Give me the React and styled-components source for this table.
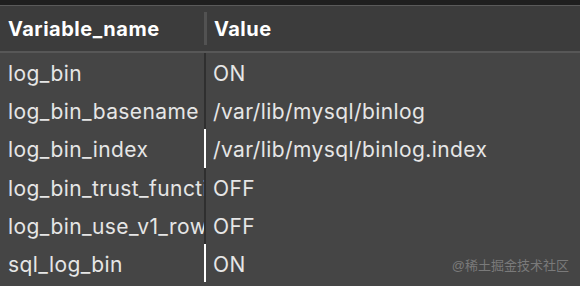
import React from 'react';
import styled, { createGlobalStyle } from 'styled-components';

const GlobalStyle = createGlobalStyle`
  html, body {
    margin: 0;
    padding: 0;
    background: #454545;
  }
  body {
    font-family: Inter, "Liberation Sans", Arial, sans-serif;
  }
`;

const Window = styled.div`
  width: 580px;
  height: 286px;
  overflow: hidden;
  position: relative;
  background: #454545;
  border-top: 5px solid #1f1f1f;
  box-sizing: border-box;
`;

const Header = styled.div`
  display: grid;
  grid-template-columns: 206px 1fr;
  height: 48px;
  background: #3c3c3c;
  border-top: 1px solid #5a5a5a;
  border-bottom: 2px solid #575757;
  box-sizing: border-box;
`;

const HeaderCell = styled.div`
  display: flex;
  align-items: center;
  padding-left: 8px;
  color: #ffffff;
  font-weight: 700;
  font-size: 20px;
  letter-spacing: 0.5px;
  position: relative;
  ${(p) =>
    !p.$first &&
    `
    &::before {
      content: '';
      position: absolute;
      left: -2px;
      top: 6px;
      bottom: 6px;
      width: 3px;
      background: #525252;
    }
  `}
`;

const Body = styled.div`
  display: flex;
  flex-direction: column;
`;

const Row = styled.div`
  display: grid;
  grid-template-columns: 206px 1fr;
  height: 38.2px;
`;

const NameCell = styled.div`
  display: flex;
  align-items: center;
  padding: 3px 0 0 8px;
  color: #e6e6e6;
  font-size: 21px;
  letter-spacing: 0.4px;
  white-space: nowrap;
  overflow: hidden;
  border-right: 2px solid ${(p) => (p.$cursor ? '#ffffff' : '#2f2f2f')};
`;

const ValueCell = styled.div`
  display: flex;
  align-items: center;
  padding: 3px 0 0 7px;
  color: #e6e6e6;
  font-size: 21px;
  letter-spacing: 0.4px;
  white-space: nowrap;
`;

const Watermark = styled.div`
  position: absolute;
  right: 11px;
  bottom: 12px;
  color: #7a7a7a;
  font-size: 13px;
  font-family: "Liberation Sans", "Noto Sans CJK SC", sans-serif;
`;

const rows = [
  { name: 'log_bin', value: 'ON' },
  { name: 'log_bin_basename', value: '/var/lib/mysql/binlog' },
  { name: 'log_bin_index', value: '/var/lib/mysql/binlog.index', cursor: true },
  { name: 'log_bin_trust_function_creators', value: 'OFF' },
  { name: 'log_bin_use_v1_row_events', value: 'OFF' },
  { name: 'sql_log_bin', value: 'ON', cursor: true },
];

const App = () => {
  return (
    <Window>
      <GlobalStyle />
      <Header>
        <HeaderCell $first>Variable_name</HeaderCell>
        <HeaderCell>Value</HeaderCell>
      </Header>
      <Body>
        {rows.map((r) => (
          <Row key={r.name}>
            <NameCell $cursor={r.cursor}>{r.name}</NameCell>
            <ValueCell>{r.value}</ValueCell>
          </Row>
        ))}
      </Body>
      <Watermark>@稀土掘金技术社区</Watermark>
    </Window>
  );
};

export default App;
